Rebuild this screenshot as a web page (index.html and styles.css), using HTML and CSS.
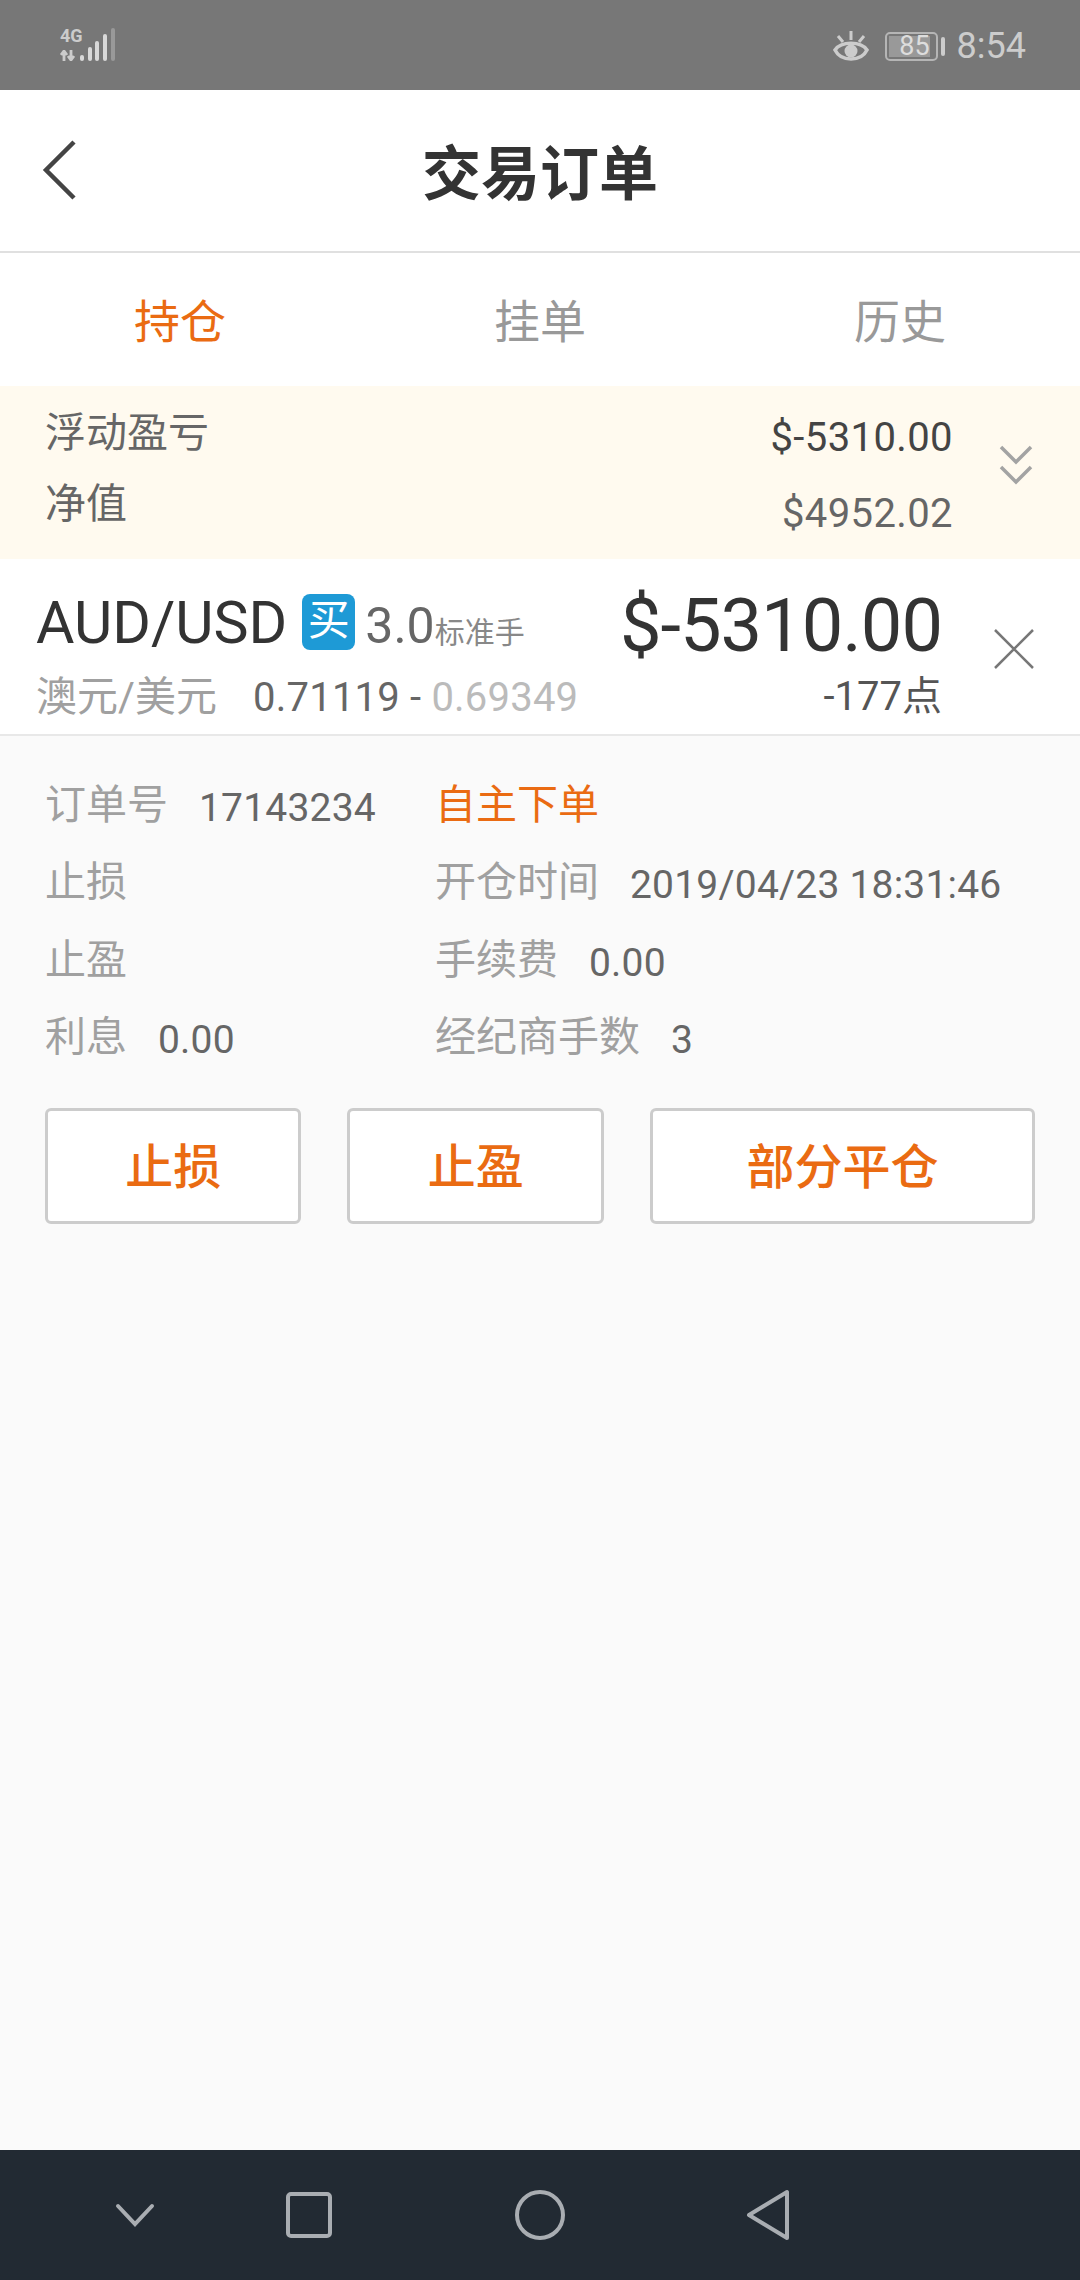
FILE: index.html
```html
<!DOCTYPE html>
<html lang="zh-CN">
<head>
    <meta charset="UTF-8">
    <meta name="viewport" content="width=device-width, initial-scale=1.0">
    <title>交易订单</title>
    <link rel="stylesheet" href="styles.css">
</head>
<body>
    <div class="status-bar">
        <div class="net">
            <div class="net-type">
                <span class="net-label">4G</span>
                <svg class="net-arrows" width="16" height="11" viewBox="0 0 16 11"><path d="M4 11V1M1 5l3-4 3 4M11 0v10M8 6l3 4 3-4" fill="none" stroke="#ccc" stroke-width="2.8"/></svg>
            </div>
            <svg class="net-bars" width="35" height="34" viewBox="0 0 35 34">
                <rect x="0" y="27" width="4" height="6" rx="2" fill="#d8d8d8"/>
                <rect x="8" y="19" width="4" height="14" rx="2" fill="#d8d8d8"/>
                <rect x="15" y="13" width="4" height="20" rx="2" fill="#d8d8d8"/>
                <rect x="23" y="6" width="4" height="27" rx="2" fill="#d8d8d8"/>
                <rect x="31" y="0" width="4" height="33" rx="2" fill="#999"/>
            </svg>
        </div>
        <div class="status-right">
            <svg width="36" height="32" viewBox="0 0 36 32">
                <path d="M2 20C8 11 28 11 34 20C28 32 8 32 2 20Z" fill="none" stroke="#ccc" stroke-width="3.500"/>
                <circle cx="18" cy="21" r="6.500" fill="#ccc"/>
                <path d="M18 1v9M5 6l5 6M31 6l-5 6" stroke="#ccc" stroke-width="3"/>
            </svg>
            <div class="battery"><span class="battery-level">85</span></div>
            <span class="battery-nub"></span>
            <span class="clock">8:54</span>
        </div>
    </div>

    <header class="top-bar">
        <svg class="back" width="34" height="60" viewBox="0 0 34 60"><path d="M32 2L4 30l28 28" fill="none" stroke="#444" stroke-width="4.500"/></svg>
        <h1>交易订单</h1>
    </header>

    <nav class="tabs">
        <div class="tab active">持仓</div>
        <div class="tab">挂单</div>
        <div class="tab">历史</div>
    </nav>

    <section class="summary">
        <div class="summary-labels">
            <div>浮动盈亏</div>
            <div>净值</div>
        </div>
        <div class="summary-values">
            <div class="dark">$-5310.00</div>
            <div>$4952.02</div>
        </div>
        <svg class="expand" width="34" height="40" viewBox="0 0 34 40"><path d="M2 2l15 15L32 2M2 22l15 15 15-15" fill="none" stroke="#a3a3a3" stroke-width="3.500"/></svg>
    </section>

    <section class="order">
        <div class="order-main">
            <div class="order-line">
                <span class="symbol">AUD/USD</span>
                <span class="badge">买</span>
                <span class="lots">3.0</span><span class="lots-unit">标准手</span>
            </div>
            <div class="order-sub">
                <span class="symbol-cn">澳元/美元</span>
                <span class="price">0.71119 - <span class="price-now">0.69349</span></span>
            </div>
        </div>
        <div class="order-profit">
            <div class="profit">$-5310.00</div>
            <div class="points">-177点</div>
        </div>
        <svg class="close" width="42" height="42" viewBox="0 0 42 42"><path d="M2 2l38 38M40 2L2 40" fill="none" stroke="#777" stroke-width="2.500"/></svg>
    </section>

    <main class="detail">
        <div class="detail-grid">
            <div><span class="key">订单号</span><span class="val">17143234</span></div>
            <div class="key orange">自主下单</div>
            <div><span class="key">止损</span></div>
            <div><span class="key">开仓时间</span><span class="val">2019/04/23 18:31:46</span></div>
            <div><span class="key">止盈</span></div>
            <div><span class="key">手续费</span><span class="val">0.00</span></div>
            <div><span class="key">利息</span><span class="val">0.00</span></div>
            <div><span class="key">经纪商手数</span><span class="val">3</span></div>
        </div>
        <div class="actions">
            <div class="btn">止损</div>
            <div class="btn">止盈</div>
            <div class="btn wide">部分平仓</div>
        </div>
    </main>

    <footer class="nav-bar">
        <svg width="40" height="24" viewBox="0 0 40 24"><path d="M3 3l17 18L37 3" fill="none" stroke="#a9adb2" stroke-width="4" stroke-linecap="round"/></svg>
        <svg class="nav-recent" width="46" height="46" viewBox="0 0 46 46"><rect x="2" y="2" width="42" height="42" rx="3" fill="none" stroke="#a9adb2" stroke-width="4"/></svg>
        <svg class="nav-home" width="50" height="50" viewBox="0 0 50 50"><circle cx="25" cy="25" r="23" fill="none" stroke="#a9adb2" stroke-width="4"/></svg>
        <svg class="nav-back" width="44" height="52" viewBox="0 0 44 52"><path d="M41 3v46L3 26Z" fill="none" stroke="#a9adb2" stroke-width="4" stroke-linejoin="round"/></svg>
    </footer>
</body>
</html>
```
FILE: styles.css
```css
* {
    margin: 0;
    padding: 0;
    box-sizing: border-box;
}

body {
    width: 1080px;
    height: 2280px;
    display: flex;
    flex-direction: column;
    background: #fafafa;
    font-family: Roboto, "Noto Sans CJK SC", sans-serif;
    overflow: hidden;
}

/* status bar */
.status-bar {
    height: 90px;
    flex: none;
    background: #777;
    display: flex;
    justify-content: space-between;
    align-items: flex-start;
    padding: 28px 54px 0 60px;
}

.net {
    display: flex;
    gap: 1px;
}

.net-type {
    display: flex;
    flex-direction: column;
    gap: 6px;
    width: 19px;
}

.net-label {
    font-size: 18px;
    line-height: 16px;
    font-weight: 700;
    color: #ccc;
}

.net-bars {
    display: block;
}

.status-right {
    display: flex;
    align-items: center;
    height: 34px;
    margin-top: 1px;
    color: #ccc;
}

.battery {
    width: 53px;
    height: 29px;
    margin-left: 16px;
    border: 2px solid #b5b5b5;
    border-radius: 5px;
    padding: 2px;
}

.battery-level {
    display: block;
    width: 41px;
    height: 21px;
    background: #999;
    color: #ddd;
    font-size: 27px;
    line-height: 21px;
    text-align: right;
}

.battery-nub {
    width: 4px;
    height: 19px;
    margin-left: 3px;
    background: #ccc;
    border-radius: 2px;
}

.clock {
    margin-left: 12px;
    font-size: 36px;
    line-height: 34px;
}

/* title */
.top-bar {
    height: 163px;
    flex: none;
    background: #fff;
    border-bottom: 2px solid #e0e0e0;
    display: flex;
    align-items: center;
    justify-content: center;
    position: relative;
}

.top-bar h1 {
    font-size: 59px;
    font-weight: 700;
    color: #333;
    line-height: 60px;
    padding-top: 8px;
}

.back {
    position: absolute;
    left: 42px;
    top: 50px;
}

/* tabs */
.tabs {
    height: 133px;
    flex: none;
    background: #fff;
    display: flex;
}

.tab {
    flex: 1;
    text-align: center;
    font-size: 46px;
    line-height: 138px;
    color: #999;
}

.tab.active {
    color: #ea6b12;
}

/* summary */
.summary {
    height: 173px;
    flex: none;
    background: #fffaef;
    display: flex;
    padding: 0 47px 0 45px;
}

.summary-labels {
    flex: 1;
    font-size: 41px;
    line-height: 71px;
    color: #666;
    padding-top: 12px;
}

.summary-values {
    text-align: right;
    font-size: 40px;
    letter-spacing: 0.400px;
    line-height: 76px;
    color: #666;
    padding-top: 14px;
}

.summary-values .dark {
    color: #444;
}

.expand {
    margin: 59px 0 0 46px;
}

/* order row */
.order {
    height: 177px;
    flex: none;
    background: #fff;
    border-bottom: 2px solid #e8e8e8;
    display: flex;
    padding: 0 45px 0 36px;
}

.order-main {
    flex: 1;
}

.order-line {
    display: flex;
    align-items: baseline;
    height: 98px;
    padding-top: 30px;
}

.symbol {
    font-size: 59px;
    line-height: 68px;
    color: #333;
}

.badge {
    width: 53px;
    height: 56px;
    margin: 5px 10px 0 15px;
    background: #1e9ad6;
    border-radius: 8px;
    color: #fff;
    font-size: 42px;
    line-height: 54px;
    text-align: center;
    align-self: flex-start;
}

.lots {
    font-size: 50px;
    line-height: 68px;
    color: #666;
}

.lots-unit {
    font-size: 30px;
    color: #888;
}

.order-sub {
    font-size: 41px;
    line-height: 50px;
    padding-top: 15px;
    white-space: nowrap;
}

.symbol-cn {
    color: #a0a0a0;
    margin-right: 26px;
}

.price {
    font-size: 40px;
    letter-spacing: 0.200px;
    color: #666;
}

.price-now {
    color: #bbb;
}

.order-profit {
    text-align: right;
    color: #333;
}

.profit {
    font-size: 74px;
    line-height: 80px;
    padding-top: 27px;
    letter-spacing: -1px;
}

.points {
    font-size: 40px;
    line-height: 50px;
    margin-top: 6px;
    color: #555;
}

.close {
    margin: 69px 0 0 51px;
}

/* detail */
.detail {
    flex: 1;
    padding: 26px 45px 0 45px;
}

.detail-grid {
    display: grid;
    grid-template-columns: 390px 1fr;
    grid-auto-rows: 77.500px;
    align-items: center;
}

.key {
    font-size: 41px;
    color: #a0a0a0;
    margin-right: 31px;
}

.val {
    font-size: 39px;
    letter-spacing: 0.200px;
    color: #666;
    vertical-align: -2px;
}

.orange {
    color: #ea6b12;
}

.actions {
    display: flex;
    gap: 46px;
    margin-top: 36px;
}

.btn {
    width: 257px;
    height: 116px;
    background: #fff;
    border: 3px solid #ccc;
    border-radius: 6px;
    text-align: center;
    font-size: 48px;
    font-weight: 500;
    line-height: 113px;
    color: #ea6b12;
}

.btn.wide {
    width: 386px;
}

/* system nav */
.nav-bar {
    height: 130px;
    flex: none;
    background: #222a33;
    display: flex;
    align-items: center;
    padding-left: 115px;
}

.nav-recent {
    margin-left: 131px;
}

.nav-home {
    margin-left: 183px;
}

.nav-back {
    margin-left: 181px;
}
```
